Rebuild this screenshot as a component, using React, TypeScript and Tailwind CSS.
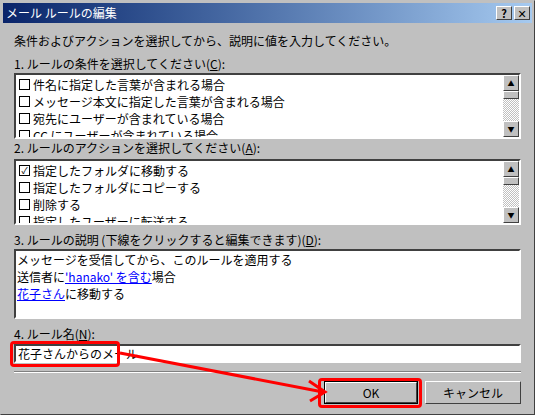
const font = { fontFamily: '"MS UI Gothic","Noto Sans CJK JP","DejaVu Sans",sans-serif' };

function Scrollbar() {
  return (
    <div className="w-[16px] flex flex-col bg-[repeating-conic-gradient(#c0c0c0_0_25%,#ffffff_0_50%)] bg-[length:2px_2px]">
      <div className="h-[16px] bg-[#c0c0c0] border border-t-white border-l-white border-r-[#404040] border-b-[#404040] flex items-center justify-center text-[7px] leading-none">▲</div>
      <div className="h-[8px] bg-[#c0c0c0] border border-t-white border-l-white border-r-[#404040] border-b-[#404040]" />
      <div className="flex-1" />
      <div className="h-[16px] bg-[#c0c0c0] border border-t-white border-l-white border-r-[#404040] border-b-[#404040] flex items-center justify-center text-[7px] leading-none">▼</div>
    </div>
  );
}

function CheckList({ items }: { items: { t: string; c?: boolean }[] }) {
  return (
    <div className="h-[66px] flex bg-white border-2 border-t-[#404040] border-l-[#404040] border-r-white border-b-white">
      <div className="flex-1 overflow-hidden pl-[3px] pt-[1px]">
        {items.map((it, i) => (
          <div key={i} className="h-[17px] flex items-center gap-[3px] text-[12px] text-black whitespace-nowrap">
            <span className="w-[11px] h-[11px] border border-black flex items-center justify-center text-[9px] leading-none">{it.c ? '✓' : ''}</span>
            <span>{it.t}</span>
          </div>
        ))}
      </div>
      <Scrollbar />
    </div>
  );
}

export default function App() {
  return (
    <div className="w-[535px] h-[415px] bg-[#c0c0c0] relative border border-t-[#c0c0c0] border-l-[#c0c0c0] border-r-[#404040] border-b-[#404040] text-[12px] leading-[14px] text-black" style={font}>
      <div className="h-[20px] mx-[2px] mt-[2px] bg-gradient-to-r from-[#0a246a] to-[#a6caf0] flex items-center justify-between pl-[3px] pr-[2px]">
        <span className="text-white text-[12px]">メール ルールの編集</span>
        <div className="flex gap-[2px]">
          <div className="w-[16px] h-[14px] bg-[#c0c0c0] border border-t-white border-l-white border-r-[#404040] border-b-[#404040] flex items-center justify-center text-[11px] font-bold leading-none">?</div>
          <div className="w-[16px] h-[14px] bg-[#c0c0c0] border border-t-white border-l-white border-r-[#404040] border-b-[#404040] flex items-center justify-center text-[11px] font-bold leading-none">✕</div>
        </div>
      </div>
      <div className="px-[13px] pt-[11px] flex flex-col">
        <div className="h-[14px]">条件およびアクションを選択してから、説明に値を入力してください。</div>
        <div className="mt-[9px] mb-[2px] h-[14px]">1. ルールの条件を選択してください(<u>C</u>):</div>
        <CheckList items={[{ t: '件名に指定した言葉が含まれる場合' }, { t: 'メッセージ本文に指定した言葉が含まれる場合' }, { t: '宛先にユーザーが含まれている場合' }, { t: 'CC にユーザーが含まれている場合' }]} />
        <div className="mt-[2px] mb-[4px] h-[14px]">2. ルールのアクションを選択してください(<u>A</u>):</div>
        <CheckList items={[{ t: '指定したフォルダに移動する', c: true }, { t: '指定したフォルダにコピーする' }, { t: '削除する' }, { t: '指定したユーザーに転送する' }]} />
        <div className="mt-[8px] h-[14px]">3. ルールの説明 (下線をクリックすると編集できます)(<u>D</u>):</div>
        <div className="h-[70px] mt-[2px] bg-white border-2 border-t-[#404040] border-l-[#404040] border-r-white border-b-white px-[1px] leading-[17px]">
          <div>メッセージを受信してから、このルールを適用する</div>
          <div>送信者に<span className="text-[#0000ff] underline">'hanako' を含む</span>場合</div>
          <div><span className="text-[#0000ff] underline">花子さん</span>に移動する</div>
        </div>
        <div className="mt-[8px] h-[14px]">4. ルール名(<u>N</u>):</div>
        <div className="h-[19px] mt-[3px] bg-white border-2 border-t-[#404040] border-l-[#404040] border-r-white border-b-white px-[2px] leading-[15px]">花子さんからのメール</div>
        <div className="mt-[8px] border-t border-t-[#808080] border-b border-b-white" />
        <div className="mt-[8px] flex justify-end gap-[7px]">
          <div className="w-[94px] h-[23px] border border-black">
            <div className="h-full border border-t-white border-l-white border-r-[#404040] border-b-[#404040] flex items-center justify-center">OK</div>
          </div>
          <div className="w-[96px] h-[23px] border border-t-white border-l-white border-r-[#404040] border-b-[#404040] flex items-center justify-center">キャンセル</div>
        </div>
      </div>
      <div className="absolute left-[9px] top-[340px] w-[110px] h-[26px] border-[3px] border-[#ff0000] rounded-[4px]" />
      <div className="absolute left-[317px] top-[377px] w-[104px] h-[30px] border-[3px] border-[#ff0000] rounded-[4px]" />
      <svg className="absolute left-0 top-0" width="535" height="415">
        <line x1="119" y1="352" x2="322" y2="391" stroke="#ff0000" strokeWidth="3" />
        <polyline points="308,380 324,391 309,400" fill="none" stroke="#ff0000" strokeWidth="3" />
      </svg>
    </div>
  );
}
